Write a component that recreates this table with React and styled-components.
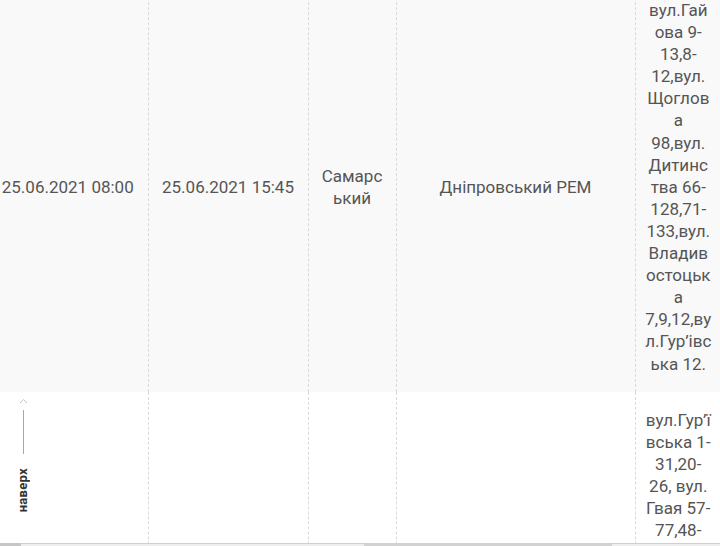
import React from "react";
import styled, { createGlobalStyle } from "styled-components";

const Global = createGlobalStyle`
  html, body { margin: 0; padding: 0; background: #fff; overflow: hidden; }
  body { font-family: Roboto, "Noto Sans", "Liberation Sans", sans-serif; }
`;

const Page = styled.div`
  position: relative;
  width: 720px;
  height: 546px;
  display: flex;
  flex-direction: column;
  overflow: hidden;
`;

const Viewport = styled.div`
  flex: 1;
  overflow: hidden;
`;

const Table = styled.table`
  border-collapse: collapse;
  table-layout: fixed;
  width: 733px;
  margin-top: -18px;
  margin-left: -12px;
`;

const Col = styled.col`
  width: ${(p) => p.$w}px;
`;

const Row = styled.tr`
  background: ${(p) => (p.$shade ? "#f9f9f9" : "#ffffff")};
`;

const Cell = styled.td`
  box-sizing: border-box;
  padding: 17px ${(p) => (p.$narrow ? 8 : 12)}px;
  font-size: 17px;
  line-height: 22.1px;
  color: #555;
  text-align: center;
  vertical-align: middle;
  overflow-wrap: break-word;
  white-space: ${(p) => (p.$narrow ? "pre-line" : "normal")};
  border-left: 1px dashed #d9d9d9;
  &:first-child { border-left: none; }
`;

const ScrollBar = styled.div`
  position: relative;
  height: 2px;
  flex: none;
  border-top: 1px solid #cfcfcf;
  background: #eeeeee;
`;

const Thumb = styled.div`
  position: absolute;
  top: -1px;
  height: 3px;
  background: #d2d2d2;
`;

const ToTop = styled.div`
  position: absolute;
  left: 14px;
  top: 398px;
  width: 18px;
  display: flex;
  flex-direction: column;
  align-items: center;
  cursor: pointer;
`;

const Chevron = styled.svg`
  display: block;
  margin-bottom: 6px;
`;

const Line = styled.div`
  width: 1px;
  height: 44px;
  background: #a8a8a8;
  margin-bottom: 14px;
`;

const TopLabel = styled.span`
  writing-mode: vertical-rl;
  transform: rotate(180deg);
  font-family: Roboto, "Liberation Sans", sans-serif;
  font-size: 13px;
  font-weight: 700;
  color: #333;
  letter-spacing: 0.3px;
  line-height: 14px;
`;

const widths = [160, 160, 88, 239, 86];

const rows = [
  {
    shade: true,
    cells: [
      "25.06.2021 08:00",
      "25.06.2021 15:45",
      "Самарський",
      "Дніпровський РЕМ",
      [
        "вул.Гай",
        "ова 9-",
        "13,8-",
        "12,вул.",
        "Щоглов",
        "а",
        "98,вул.",
        "Дитинс",
        "тва 66-",
        "128,71-",
        "133,вул.",
        "Владив",
        "остоцьк",
        "а",
        "7,9,12,ву",
        "л.Гур’івс",
        "ька 12.",
      ].join("\n"),
    ],
  },
  {
    shade: false,
    cells: [
      "",
      "",
      "",
      "",
      [
        "вул.Гур’ї",
        "вська 1-",
        "31,20-",
        "26, вул.",
        "Гвая 57-",
        "77,48-",
        "60,вул.",
        "Дитинс",
        "тва 1-15.",
      ].join("\n"),
    ],
  },
];

export default function App() {
  return (
    <Page>
      <Global />
      <Viewport>
        <Table>
          <colgroup>
            {widths.map((w, i) => (
              <Col key={i} $w={w} />
            ))}
          </colgroup>
          <tbody>
            {rows.map((r, i) => (
              <Row key={i} $shade={r.shade}>
                {r.cells.map((c, j) => (
                  <Cell key={j} $narrow={j === 4}>
                    {c}
                  </Cell>
                ))}
              </Row>
            ))}
          </tbody>
        </Table>
      </Viewport>
      <ScrollBar>
        <Thumb style={{ left: 0, width: 21, background: "#c6c6c6" }} />
        <Thumb style={{ left: 364, width: 248 }} />
      </ScrollBar>
      <ToTop>
        <Chevron width="9" height="6" viewBox="0 0 9 6">
          <path d="M1 5 L4.5 1.5 L8 5" fill="none" stroke="#c4c4c4" strokeWidth="1" />
        </Chevron>
        <Line />
        <TopLabel>наверх</TopLabel>
      </ToTop>
    </Page>
  );
}
